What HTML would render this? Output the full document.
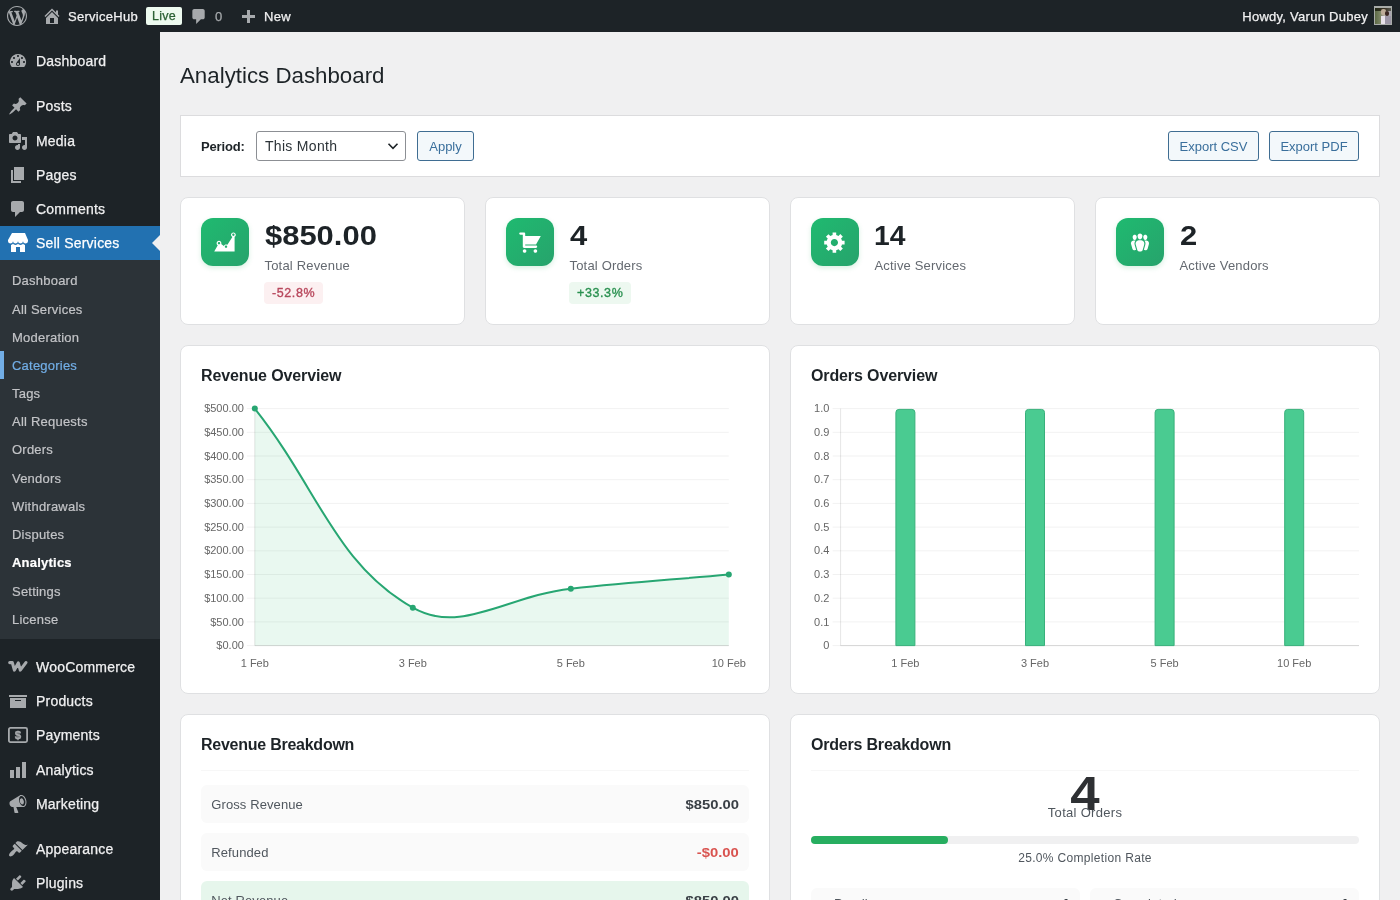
<!DOCTYPE html>
<html lang="en">
<head>
<meta charset="utf-8">
<title>Analytics Dashboard</title>
<style>
*{box-sizing:border-box;margin:0;padding:0}
html,body{width:1400px;height:900px;overflow:hidden}
body{background:#f0f0f1;font-family:"Liberation Sans",sans-serif;color:#1d2327;position:relative;font-size:13px}
.abs{position:absolute}
#bar,#side,h1,.filter,.card{will-change:transform}
/* ---------- admin bar ---------- */
#bar{position:absolute;left:0;top:0;width:1400px;height:32px;background:#1d2327;color:#f0f0f1;z-index:5}
#bar .t{position:absolute;top:1px;height:32px;line-height:32px;font-size:13px;white-space:nowrap;color:#f0f0f1;letter-spacing:.27px;-webkit-text-stroke:.25px currentColor}
#bar svg{position:absolute;fill:#a7aaad}
/* ---------- sidebar ---------- */
#side{position:absolute;left:0;top:32px;width:160px;height:868px;background:#1d2327;z-index:4}
.mi{position:absolute;left:0;width:160px;height:34px;color:#f0f0f1;font-size:14px;line-height:34px;padding-left:36px;white-space:nowrap;letter-spacing:.2px;-webkit-text-stroke:.25px currentColor}
.mi svg{position:absolute;left:8px;top:7px;width:20px;height:20px;fill:#a7aaad}
.mi.cur{background:#2271b1;color:#fff}
.mi.cur svg{fill:#fff}
#sub{position:absolute;left:0;top:228px;width:160px;height:378.700px;background:#2c3338}
.si{position:absolute;left:12px;margin-top:.4px;font-size:13px;line-height:18px;color:#c3c4c7;white-space:nowrap;letter-spacing:.22px;-webkit-text-stroke:.2px currentColor}
/* ---------- content ---------- */
#main{position:absolute;left:160px;top:32px;width:1240px;height:868px}
h1{position:absolute;left:180.300px;top:59px;font-size:22.300px;font-weight:400;line-height:34px;color:#1d2327;white-space:nowrap;letter-spacing:0}
.card{position:absolute;background:#fff;border:1px solid #dfe0e2;border-radius:8px}
.filter{position:absolute;left:180px;top:115px;width:1200px;height:62px;background:#fff;border:1px solid #dcdcde}
.btn{height:30px;line-height:30px;border:1px solid #3f6d92;border-radius:3px;background:#f3f8fb;color:#3a6f9c;font-size:13px;text-align:center;white-space:nowrap}
.row{position:absolute;left:20px;width:548px;height:38px;background:#fafafa;border-radius:6px}
.rl{position:absolute;left:10.300px;top:11px;letter-spacing:.1px;font-size:13px;line-height:18px;color:#50575e;white-space:nowrap}
.rv{position:absolute;right:10px;top:11px;font-size:13px;line-height:18px;font-weight:700;color:#393f45;white-space:nowrap;transform:scaleX(1.14);transform-origin:100% 0}
.h2{position:absolute;font-size:16px;font-weight:700;color:#1d2327;white-space:nowrap;line-height:20px;margin-top:1px;letter-spacing:-.12px}
.ico{box-shadow:0 2px 5px rgba(39,174,96,.18);position:absolute;width:48px;height:48px;border-radius:12px;background:linear-gradient(135deg,#1fba70 0%,#27a36c 100%)}
.ico svg{position:absolute;left:12px;top:12px;width:24px;height:24px;fill:#fff}
.num{position:absolute;font-size:28px;font-weight:700;color:#1d2327;line-height:32px;white-space:nowrap;transform:scaleX(1.105);transform-origin:0 0}
.lbl{position:absolute;font-size:13px;color:#646970;line-height:18px;white-space:nowrap;letter-spacing:.18px;margin-left:-.5px}
.chg{position:absolute;height:22px;line-height:22px;font-size:12.500px;font-weight:400;-webkit-text-stroke:.35px currentColor;letter-spacing:.6px;padding:0 7.400px 0 8px;border-radius:4px;white-space:nowrap}
</style>
</head>
<body>

<!-- ================= ADMIN BAR ================= -->
<div id="bar">
<svg style="left:7px;top:6px;width:20px;height:20px" viewBox="0 0 20 20"><path d="M20 10c0-5.51-4.49-10-10-10C4.48 0 0 4.49 0 10c0 5.52 4.48 10 10 10 5.51 0 10-4.48 10-10zM7.78 15.37L4.37 6.22c.55-.02 1.17-.08 1.17-.08.5-.06.44-1.13-.06-1.11 0 0-1.45.11-2.37.11-.18 0-.37 0-.58-.01C4.12 2.69 6.87 1.11 10 1.11c2.33 0 4.45.87 6.05 2.34-.68-.11-1.65.39-1.65 1.58 0 .74.45 1.36.9 2.1.35.61.55 1.36.55 2.46 0 1.49-1.4 5-1.4 5l-3.03-8.37c.54-.02.82-.17.82-.17.5-.05.44-1.25-.06-1.22 0 0-1.44.12-2.38.12-.87 0-2.33-.12-2.33-.12-.5-.03-.56 1.2-.06 1.22l.92.08 1.26 3.41zM17.41 10c.24-.64.74-1.87.43-4.25.7 1.29 1.05 2.71 1.05 4.25 0 3.29-1.73 6.24-4.4 7.78.97-2.59 1.94-5.2 2.92-7.78zM6.1 18.09C3.12 16.65 1.11 13.53 1.11 10c0-1.3.23-2.48.72-3.59C3.25 10.3 4.67 14.2 6.1 18.09zm4.03-6.63l2.58 6.98c-.86.29-1.76.45-2.71.45-.79 0-1.57-.11-2.29-.33.81-2.38 1.62-4.74 2.42-7.1z"/></svg>
<svg style="left:42px;top:6px;width:20px;height:20px" viewBox="0 0 20 20"><path d="M16 8.5l1.53 1.53-1.06 1.06L10 4.620l-6.470 6.470-1.060-1.060L10 2.500l4 4v-2h2v4zm-6-2.460l6 5.990V18H4v-5.970zM12 17v-5H8v5h4z"/></svg>
<span class="t" style="left:68px">ServiceHub</span>
<span class="t" style="left:146px;top:7px;height:18px;line-height:18px;width:36px;text-align:center;background:#edfaef;color:#2a6133;border-radius:2px;font-size:12.5px">Live</span>
<svg style="left:188.500px;top:7px;width:20px;height:19px" viewBox="0 0 20 20"><path d="M5 2h9c1.100 0 2 .900 2 2v7c0 1.100-.900 2-2 2h-2l-5 5v-5H5c-1.100 0-2-.900-2-2V4c0-1.100.900-2 2-2z"/></svg>
<span class="t" style="left:215px;color:#a7aaad">0</span>
<svg style="left:241.800px;top:10.200px;width:13px;height:13px" viewBox="0 0 13 13"><path d="M5 0h3v5h5v3H8v5H5V8H0V5h5z"/></svg>
<span class="t" style="left:264px">New</span>
<span class="t" style="right:32px">Howdy, Varun Dubey</span>
<div style="position:absolute;left:1374px;top:6px;width:18px;height:19px;background:#a9aca9;overflow:hidden"><div style="position:absolute;left:1px;top:1.500px;width:16px;height:16px;background:linear-gradient(90deg,#5d6a45 0%,#7f8768 35%,#b9b3ad 60%,#a9a5b0 100%)"></div><div style="position:absolute;left:1px;top:1.500px;width:16px;height:3px;background:linear-gradient(90deg,#232a16,#3a3326 60%,#5a5a50)"></div><div style="position:absolute;left:6.500px;top:3px;width:5px;height:6px;border-radius:2px;background:#bdac98"></div><div style="position:absolute;left:11px;top:5px;width:4px;height:5px;border-radius:2px;background:#3a2622"></div><div style="position:absolute;left:6.500px;top:9.500px;width:4.500px;height:8px;background:#e8e2ea"></div><div style="position:absolute;left:11px;top:10px;width:6px;height:7.500px;background:#9c96a6"></div></div>
</div>

<!-- ================= SIDEBAR ================= -->
<div id="side">
<div class="mi" style="top:12px"><svg style="top:7px" viewBox="0 0 20 20"><path d="M3.760 16h12.480A7.998 7.998 0 0 0 10 3a7.998 7.998 0 0 0-6.240 13zM10 4c.55 0 1 .45 1 1s-.45 1-1 1-1-.45-1-1 .45-1 1-1zM6 6c.55 0 1 .45 1 1s-.45 1-1 1-1-.45-1-1 .45-1 1-1zm8 0c.55 0 1 .45 1 1s-.45 1-1 1-1-.45-1-1 .45-1 1-1zm-5.370 5.550L12 7v6c0 1.100-.900 2-2 2s-2-.900-2-2c0-.570.240-1.080.630-1.450zM4 10c.55 0 1 .45 1 1s-.45 1-1 1-1-.45-1-1 .45-1 1-1zm12 0c.55 0 1 .45 1 1s-.45 1-1 1-1-.45-1-1 .45-1 1-1zm-5 3c0-.55-.45-1-1-1s-1 .45-1 1 .45 1 1 1 1-.45 1-1z"/></svg>Dashboard</div>
<div class="mi" style="top:57px"><svg style="top:7px" viewBox="0 0 20 20"><path d="M10.440 3.020l1.820-1.820 6.360 6.350-1.830 1.820c-1.050-.680-2.480-.570-3.410.360l-.750.750c-.920.930-1.040 2.350-.350 3.410l-1.830 1.820-2.410-2.410-2.800 2.790c-.420.420-3.380 2.710-3.800 2.290s1.860-3.390 2.280-3.810l2.790-2.790L4.100 9.360l1.830-1.820c1.050.690 2.480.570 3.400-.360l.750-.750c.930-.920 1.050-2.350.360-3.410z"/></svg>Posts</div>
<div class="mi" style="top:92px"><svg style="top:7px" viewBox="0 0 20 20"><path d="M13 11V4c0-.55-.45-1-1-1h-1.670L9 1H5L3.670 3H2c-.55 0-1 .45-1 1v7c0 .55.45 1 1 1h10c.55 0 1-.45 1-1zM7 4.500c1.380 0 2.500 1.120 2.500 2.500S8.380 9.500 7 9.500 4.500 8.380 4.500 7 5.620 4.500 7 4.500zM14 6h5v10.500c0 1.380-1.120 2.500-2.500 2.500S14 17.880 14 16.500s1.120-2.500 2.500-2.500c.17 0 .34.020.5.050V9h-3V6zm-4 8.050V13h2v3.500c0 1.380-1.120 2.500-2.500 2.500S7 17.880 7 16.500 8.120 14 9.500 14c.17 0 .34.020.5.050z"/></svg>Media</div>
<div class="mi" style="top:126px"><svg style="top:7px" viewBox="0 0 20 20"><path d="M6 15V2h10v13H6zm-1 1h8v2H3V5h2v11z"/></svg>Pages</div>
<div class="mi" style="top:160px"><svg style="top:7px" viewBox="0 0 20 20"><path d="M5 2h9c1.100 0 2 .900 2 2v7c0 1.100-.900 2-2 2h-2l-5 5v-5H5c-1.100 0-2-.900-2-2V4c0-1.100.900-2 2-2z"/></svg>Comments</div>
<div class="mi cur" style="top:194px"><svg style="top:7px" viewBox="0 0 20 20"><path d="M1 10c.41.29.96.43 1.500.43.55 0 1.090-.14 1.500-.43.62-.46 1-1.170 1-2 0 .83.37 1.540 1 2 .41.29.96.43 1.500.43.55 0 1.090-.14 1.500-.43.62-.46 1-1.170 1-2 0 .83.37 1.540 1 2 .41.29.96.43 1.510.43.54 0 1.080-.14 1.490-.43.62-.46 1-1.170 1-2 0 .83.37 1.540 1 2 .41.29.96.43 1.500.43.55 0 1.090-.14 1.500-.43.63-.46 1-1.170 1-2V7l-3-7H4L0 7v1c0 .83.37 1.540 1 2zm2 8.990h5v-5h4v5h5v-7c-.37-.05-.72-.22-1-.43-.63-.45-1-.73-1-1.560 0 .83-.38 1.110-1 1.560-.41.300-.95.430-1.490.440-.55 0-1.100-.140-1.510-.440-.63-.45-1-.73-1-1.560 0 .83-.38 1.110-1 1.560-.41.300-.95.430-1.500.440-.54 0-1.090-.140-1.500-.440-.63-.45-1-.73-1-1.560 0 .83-.38 1.110-1 1.560-.28.210-.63.380-1 .440v6.990z"/></svg>Sell Services</div>
<div style="position:absolute;left:152px;top:203px;width:0;height:0;border:8px solid transparent;border-right-color:#f0f0f1;border-left:0"></div>
<div id="sub">
<div class="si" style="top:11.4px">Dashboard</div>
<div class="si" style="top:40.3px">All Services</div>
<div class="si" style="top:68.6px">Moderation</div>
<div class="si" style="top:96.2px;color:#72aee6">Categories</div>
<div class="si" style="top:124.5px">Tags</div>
<div class="si" style="top:152.8px">All Requests</div>
<div class="si" style="top:181.1px">Orders</div>
<div class="si" style="top:209.4px">Vendors</div>
<div class="si" style="top:237.6px">Withdrawals</div>
<div class="si" style="top:265.9px">Disputes</div>
<div class="si" style="top:293.6px;color:#fff;font-weight:700">Analytics</div>
<div class="si" style="top:322.5px">Settings</div>
<div class="si" style="top:350.8px">License</div>
<div style="position:absolute;left:0;top:91px;width:4px;height:28px;background:#72aee6"></div>
</div>
<div class="mi" style="top:618px"><svg style="top:7px" viewBox="0 0 20 20"><path d="M1.700 5.600H4.300L6.400 13.100L10.300 5.900L12.300 13.100L17.900 5.600" fill="none" stroke="#a7aaad" stroke-width="3.100" stroke-linecap="round" stroke-linejoin="round"/></svg>WooCommerce</div>
<div class="mi" style="top:652px"><svg style="top:7px" viewBox="0 0 20 20"><path d="M19 4v2H1V4h18zM2 7h16v10H2V7zm11 3V9H7v1h6z"/></svg>Products</div>
<div class="mi" style="top:686px"><svg style="top:7px" viewBox="0 0 20 20"><rect x="0.900" y="2.900" width="18.200" height="14.200" rx="1.500" fill="none" stroke="#a7aaad" stroke-width="1.800"/><text x="10" y="14.100" font-family="Liberation Sans, sans-serif" font-weight="700" font-size="11.500" text-anchor="middle" fill="#a7aaad" stroke="#a7aaad" stroke-width=".4">$</text></svg>Payments</div>
<div class="mi" style="top:721px"><svg style="top:7px" viewBox="0 0 20 20"><path d="M18 18V2h-4v16h4zm-6 0V7H8v11h4zm-6 0v-8H2v8h4z"/></svg>Analytics</div>
<div class="mi" style="top:755px"><svg style="top:7px" viewBox="0 0 20 20"><path d="M18.150 5.940c.46 1.620.38 3.220-.02 4.480-.42 1.280-1.260 2.180-2.300 2.480-.16.060-.26.060-.4.060-.06.020-.12.020-.18.020-.06.020-.14.020-.22.020h-6.800l2.220 5.500c.02.140-.6.260-.14.340-.8.100-.24.160-.34.160H6.950c-.1 0-.26-.06-.34-.16-.08-.08-.16-.2-.14-.34l-1-5.500H4.250l-.02-.02c-.5.060-1.080-.18-1.540-.62s-.88-1.080-1.060-1.880c-.24-.8-.2-1.560-.02-2.200.18-.62.580-1.080 1.060-1.300l.02-.02 9-5.400c.1-.06.180-.1.240-.16.060-.4.140-.8.240-.12.160-.8.280-.12.500-.18 1.040-.3 2.240.1 3.220.98 1.020.9 1.820 2.240 2.260 3.860zm-2.580 5.980h-.02c.4-.1.740-.34 1.040-.7.580-.7.860-1.760.86-3.040 0-.64-.1-1.300-.28-1.980-.34-1.360-1.020-2.500-1.780-3.240s-1.680-1.100-2.460-.88c-.82.220-1.400.96-1.700 2-.32 1.040-.28 2.360.06 3.720.38 1.360 1 2.500 1.800 3.240.78.740 1.620 1.100 2.480.88zm-2.540-7.520c.34-.1.720-.02 1.100.16.340.18.700.52.980.9.260.38.520.88.660 1.440.14.580.16 1.120.12 1.580-.4.500-.18.900-.38 1.240-.2.300-.48.520-.82.620-.34.100-.7.060-1.060-.14-.38-.16-.72-.48-1-.88-.28-.38-.52-.88-.66-1.440-.16-.58-.2-1.120-.14-1.580.04-.5.160-.9.360-1.240.2-.30.480-.56.840-.66z"/></svg>Marketing</div>
<div class="mi" style="top:800px"><svg style="top:7px" viewBox="0 0 20 20"><path d="M14.480 11.060L7.410 3.990l1.500-1.500c.5-.56 2.300-.47 3.510.32 1.210.8 1.430 1.280 2.910 2.100 1.180.64 2.450 1.260 4.450.85zm-.710.710L6.700 4.700 4.930 6.470c-.39.39-.39 1.020 0 1.410l1.060 1.060c.39.39.39 1.030 0 1.420-.6.6-1.430 1.110-2.210 1.690-.35.26-.7.53-1.010.84C1.430 14.230.4 16.080 1.400 17.070c.99 1 2.840-.03 4.180-1.360.31-.31.580-.66.850-1.020.57-.78 1.080-1.610 1.690-2.210.39-.39 1.020-.39 1.410 0l1.060 1.060c.39.39 1.020.39 1.410 0z"/></svg>Appearance</div>
<div class="mi" style="top:834px"><svg style="top:7px" viewBox="0 0 20 20"><path d="M13.110 4.360L9.870 7.600 8 5.730l3.240-3.240c.35-.34 1.050-.2 1.560.32.52.51.66 1.210.31 1.550zm-8 1.770l.91-1.120 9.010 9.010-1.190.84c-.71.71-2.630 1.160-3.820 1.160H6.140L4.900 17.260c-.59.59-1.540.59-2.120 0-.59-.58-.59-1.530 0-2.120l1.240-1.240v-3.880c0-1.130.4-3.190 1.090-3.890zm7.260 3.970l3.240-3.240c.34-.35 1.040-.21 1.550.31.52.51.66 1.210.31 1.550l-3.240 3.250z"/></svg>Plugins</div>
</div>

<!-- ================= CONTENT ================= -->
<h1>Analytics Dashboard</h1>

<div class="filter">
<span class="abs" style="left:20px;top:22px;font-size:13px;font-weight:700;line-height:18px;color:#1d2327;letter-spacing:-.15px">Period:</span>
<div class="abs" style="left:75px;top:15px;width:150px;height:30px;border:1px solid #8c8f94;border-radius:3px;background:#fff;font-size:14px;line-height:28px;padding-left:8px;color:#2c3338;letter-spacing:.3px">This Month
<svg class="abs" style="right:6px;top:8px;width:12px;height:12px" viewBox="0 0 12 12"><path d="M1.500 3.800L6 8.300l4.500-4.500" fill="none" stroke="#1d2327" stroke-width="1.600"/></svg></div>
<div class="abs btn" style="left:236px;top:15px;width:57px">Apply</div>
<div class="abs btn" style="left:987px;top:15px;width:91px">Export CSV</div>
<div class="abs btn" style="left:1088px;top:15px;width:90px">Export PDF</div>
</div>

<!-- stat cards -->
<div class="card" id="c1" style="left:180px;top:197px;width:285px;height:128px">
<div class="ico" style="left:20px;top:20px"><svg viewBox="0 0 20 20"><path d="M18 18l.01-12.280c.59-.35.99-.99.99-1.720 0-1.100-.9-2-2-2s-2 .9-2 2c0 .8.47 1.480 1.140 1.800l-4.130 6.580c-.33-.24-.73-.38-1.160-.38-.84 0-1.550.51-1.850 1.240l-2.140-1.530c.09-.22.14-.46.14-.71 0-1.110-.89-2-2-2-1.100 0-2 .89-2 2 0 .73.4 1.360.98 1.710L1 18h17zM17 3c.55 0 1 .45 1 1s-.45 1-1 1-1-.45-1-1 .45-1 1-1zM5 10c.55 0 1 .45 1 1s-.45 1-1 1-1-.45-1-1 .45-1 1-1zm5.850 3c.55 0 1 .45 1 1s-.45 1-1 1-1-.45-1-1 .45-1 1-1z"/></svg></div>
<div class="num" style="left:84px;top:21.500px">$850.00</div>
<div class="lbl" style="left:84px;top:59px">Total Revenue</div>
<div class="chg" style="left:83px;top:84px;background:#fcf0f1;color:#b8475c">-52.8%</div>
</div>
<div class="card" id="c2" style="left:485px;top:197px;width:285px;height:128px">
<div class="ico" style="left:20px;top:20px"><svg viewBox="0 0 20 20"><path d="M6 13h9c.55 0 1 .45 1 1s-.45 1-1 1H5c-.55 0-1-.45-1-1V4H2c-.55 0-1-.45-1-1s.45-1 1-1h3c.55 0 1 .45 1 1v2h13l-4 7H6v1zm-.5 3c.83 0 1.500.67 1.500 1.500S6.330 19 5.500 19 4 18.330 4 17.500 4.670 16 5.500 16zm9 0c.83 0 1.500.67 1.500 1.500s-.67 1.500-1.500 1.500-1.500-.67-1.500-1.500.67-1.500 1.500-1.500z"/></svg></div>
<div class="num" style="left:84px;top:21.500px">4</div>
<div class="lbl" style="left:84px;top:59px">Total Orders</div>
<div class="chg" style="left:83px;top:84px;background:#edf8f0;color:#2a9150">+33.3%</div>
</div>
<div class="card" id="c3" style="left:790px;top:197px;width:285px;height:128px">
<div class="ico" style="left:20px;top:20px"><svg viewBox="0 0 20 20"><path d="M18 12h-2.180c-.17.7-.44 1.350-.81 1.930l1.540 1.540-2.100 2.100-1.540-1.540c-.58.36-1.230.63-1.910.79V19H8v-2.180c-.68-.16-1.330-.43-1.910-.79l-1.540 1.540-2.120-2.120 1.540-1.540c-.36-.58-.63-1.230-.79-1.910H1V9.030h2.170c.16-.7.44-1.350.8-1.940L2.430 5.550l2.100-2.100 1.540 1.540c.58-.37 1.240-.64 1.930-.81V2h3v2.180c.68.16 1.330.43 1.910.79l1.540-1.540 2.120 2.120-1.540 1.540c.36.59.64 1.240.8 1.940H18V12zm-8.500 1.500c1.660 0 3-1.340 3-3s-1.340-3-3-3-3 1.340-3 3 1.340 3 3 3z"/></svg></div>
<div class="num" style="left:82.500px;top:21.500px;transform:scaleX(1.01)">14</div>
<div class="lbl" style="left:84px;top:59px">Active Services</div>
</div>
<div class="card" id="c4" style="left:1095px;top:197px;width:285px;height:128px">
<div class="ico" style="left:20px;top:20px"><svg viewBox="0 0 20 20"><path d="M8.030 4.460c-.29 1.280.55 3.460 1.970 3.460 1.410 0 2.250-2.180 1.960-3.460-.22-.98-1.080-1.630-1.960-1.630-.89 0-1.740.65-1.970 1.630zm-4.130.9c-.25 1.080.47 2.930 1.670 2.930s1.920-1.850 1.670-2.930c-.19-.83-.92-1.390-1.670-1.390s-1.480.56-1.670 1.390zm8.860 0c-.25 1.080.47 2.930 1.660 2.930 1.200 0 1.920-1.850 1.670-2.930-.19-.83-.92-1.390-1.670-1.390-.74 0-1.470.56-1.660 1.390zm-.59 11.430l1.250-4.300C14.200 10 12.710 8.470 10 8.470c-2.720 0-4.210 1.530-3.440 4.020l1.260 4.300C8.050 17.510 9 18 10 18c.98 0 1.940-.49 2.170-1.210zm-6.100-7.630c-.49.67-.96 1.830-.42 3.590l1.120 3.790c-.34.2-.77.31-1.200.31-.85 0-1.650-.41-1.850-1.030l-1.070-3.650c-.65-2.110.61-3.400 2.920-3.400.27 0 .54.02.79.06-.1.1-.2.22-.29.33zm8.350-.39c2.310 0 3.580 1.290 2.920 3.400l-1.070 3.650c-.2.620-1 1.030-1.850 1.030-.43 0-.86-.11-1.200-.31l1.110-3.770c.55-1.780.08-2.940-.42-3.610-.08-.11-.18-.23-.28-.33.25-.04.51-.06.79-.06z"/></svg></div>
<div class="num" style="left:84px;top:21.500px">2</div>
<div class="lbl" style="left:84px;top:59px">Active Vendors</div>
</div>

<!-- chart cards -->
<div class="card" id="rev" style="left:180px;top:345px;width:590px;height:349px">
<div class="h2" style="left:20px;top:19px">Revenue Overview</div>
<svg class="abs" style="left:-1px;top:-1px" width="590" height="349" viewBox="0 0 590 349" font-family="Liberation Sans, sans-serif" font-size="11" fill="#666">
<line x1="66.8" y1="63.6" x2="548.8" y2="63.6" stroke="#000" stroke-opacity="0.055" stroke-width="1"/>
<text x="63.9" y="67.2" text-anchor="end">$500.00</text>
<line x1="66.8" y1="87.3" x2="548.8" y2="87.3" stroke="#000" stroke-opacity="0.055" stroke-width="1"/>
<text x="63.9" y="90.9" text-anchor="end">$450.00</text>
<line x1="66.8" y1="111.0" x2="548.8" y2="111.0" stroke="#000" stroke-opacity="0.055" stroke-width="1"/>
<text x="63.9" y="114.6" text-anchor="end">$400.00</text>
<line x1="66.8" y1="134.7" x2="548.8" y2="134.7" stroke="#000" stroke-opacity="0.055" stroke-width="1"/>
<text x="63.9" y="138.3" text-anchor="end">$350.00</text>
<line x1="66.8" y1="158.4" x2="548.8" y2="158.4" stroke="#000" stroke-opacity="0.055" stroke-width="1"/>
<text x="63.9" y="162.0" text-anchor="end">$300.00</text>
<line x1="66.8" y1="182.1" x2="548.8" y2="182.1" stroke="#000" stroke-opacity="0.055" stroke-width="1"/>
<text x="63.9" y="185.7" text-anchor="end">$250.00</text>
<line x1="66.8" y1="205.8" x2="548.8" y2="205.8" stroke="#000" stroke-opacity="0.055" stroke-width="1"/>
<text x="63.9" y="209.4" text-anchor="end">$200.00</text>
<line x1="66.8" y1="229.5" x2="548.8" y2="229.5" stroke="#000" stroke-opacity="0.055" stroke-width="1"/>
<text x="63.9" y="233.1" text-anchor="end">$150.00</text>
<line x1="66.8" y1="253.2" x2="548.8" y2="253.2" stroke="#000" stroke-opacity="0.055" stroke-width="1"/>
<text x="63.9" y="256.8" text-anchor="end">$100.00</text>
<line x1="66.8" y1="276.9" x2="548.8" y2="276.9" stroke="#000" stroke-opacity="0.055" stroke-width="1"/>
<text x="63.9" y="280.5" text-anchor="end">$50.00</text>
<line x1="66.8" y1="300.6" x2="548.8" y2="300.6" stroke="#000" stroke-opacity="0.055" stroke-width="1"/>
<text x="63.9" y="304.2" text-anchor="end">$0.00</text>
<line x1="74.8" y1="63.6" x2="74.8" y2="300.6" stroke="#000" stroke-opacity="0.10" stroke-width="1"/>
<line x1="74.8" y1="300.6" x2="548.8" y2="300.6" stroke="#000" stroke-opacity="0.12" stroke-width="1"/>
<path d="M74.8 63.6 C138.0 143.2 155.1 218.4 232.8 262.7 C281.5 290.4 327.5 250.4 390.8 243.7 C453.9 237.1 485.6 235.2 548.8 229.5 L548.8 300.6 L74.8 300.6 Z" fill="#36c077" fill-opacity="0.11"/>
<path d="M74.8 63.6 C138.0 143.2 155.1 218.4 232.8 262.7 C281.5 290.4 327.5 250.4 390.8 243.7 C453.9 237.1 485.6 235.2 548.8 229.5" fill="none" stroke="#27a672" stroke-width="2" stroke-linejoin="round"/>
<circle cx="74.8" cy="63.6" r="3" fill="#27a672"/>
<circle cx="232.8" cy="262.7" r="3" fill="#27a672"/>
<circle cx="390.8" cy="243.7" r="3" fill="#27a672"/>
<circle cx="548.8" cy="229.5" r="3" fill="#27a672"/>
<text x="74.8" y="322.0" text-anchor="middle">1 Feb</text>
<text x="232.8" y="322.0" text-anchor="middle">3 Feb</text>
<text x="390.8" y="322.0" text-anchor="middle">5 Feb</text>
<text x="548.8" y="322.0" text-anchor="middle">10 Feb</text>
</svg>
</div>
<div class="card" id="ord" style="left:790px;top:345px;width:590px;height:349px">
<div class="h2" style="left:20px;top:19px">Orders Overview</div>
<svg class="abs" style="left:-1px;top:-1px" width="590" height="349" viewBox="0 0 590 349" font-family="Liberation Sans, sans-serif" font-size="11" fill="#666">
<line x1="42.6" y1="63.6" x2="569.0" y2="63.6" stroke="#000" stroke-opacity="0.055" stroke-width="1"/>
<text x="39.4" y="67.2" text-anchor="end">1.0</text>
<line x1="42.6" y1="87.3" x2="569.0" y2="87.3" stroke="#000" stroke-opacity="0.055" stroke-width="1"/>
<text x="39.4" y="90.9" text-anchor="end">0.9</text>
<line x1="42.6" y1="111.0" x2="569.0" y2="111.0" stroke="#000" stroke-opacity="0.055" stroke-width="1"/>
<text x="39.4" y="114.6" text-anchor="end">0.8</text>
<line x1="42.6" y1="134.7" x2="569.0" y2="134.7" stroke="#000" stroke-opacity="0.055" stroke-width="1"/>
<text x="39.4" y="138.3" text-anchor="end">0.7</text>
<line x1="42.6" y1="158.4" x2="569.0" y2="158.4" stroke="#000" stroke-opacity="0.055" stroke-width="1"/>
<text x="39.4" y="162.0" text-anchor="end">0.6</text>
<line x1="42.6" y1="182.1" x2="569.0" y2="182.1" stroke="#000" stroke-opacity="0.055" stroke-width="1"/>
<text x="39.4" y="185.7" text-anchor="end">0.5</text>
<line x1="42.6" y1="205.8" x2="569.0" y2="205.8" stroke="#000" stroke-opacity="0.055" stroke-width="1"/>
<text x="39.4" y="209.4" text-anchor="end">0.4</text>
<line x1="42.6" y1="229.5" x2="569.0" y2="229.5" stroke="#000" stroke-opacity="0.055" stroke-width="1"/>
<text x="39.4" y="233.1" text-anchor="end">0.3</text>
<line x1="42.6" y1="253.2" x2="569.0" y2="253.2" stroke="#000" stroke-opacity="0.055" stroke-width="1"/>
<text x="39.4" y="256.8" text-anchor="end">0.2</text>
<line x1="42.6" y1="276.9" x2="569.0" y2="276.9" stroke="#000" stroke-opacity="0.055" stroke-width="1"/>
<text x="39.4" y="280.5" text-anchor="end">0.1</text>
<line x1="42.6" y1="300.6" x2="569.0" y2="300.6" stroke="#000" stroke-opacity="0.055" stroke-width="1"/>
<text x="39.4" y="304.2" text-anchor="end">0</text>
<line x1="50.6" y1="63.6" x2="50.6" y2="300.6" stroke="#000" stroke-opacity="0.10" stroke-width="1"/>
<line x1="50.6" y1="300.6" x2="569.0" y2="300.6" stroke="#000" stroke-opacity="0.12" stroke-width="1"/>
<path d="M105.9 300.6 V67.4 Q105.9 64.4 108.9 64.4 H121.9 Q124.9 64.4 124.9 67.4 V300.6 Z" fill="#4acb91" stroke="#38b07b" stroke-width="1"/>
<text x="115.4" y="322.0" text-anchor="middle">1 Feb</text>
<path d="M235.5 300.6 V67.4 Q235.5 64.4 238.5 64.4 H251.5 Q254.5 64.4 254.5 67.4 V300.6 Z" fill="#4acb91" stroke="#38b07b" stroke-width="1"/>
<text x="245.0" y="322.0" text-anchor="middle">3 Feb</text>
<path d="M365.1 300.6 V67.4 Q365.1 64.4 368.1 64.4 H381.1 Q384.1 64.4 384.1 67.4 V300.6 Z" fill="#4acb91" stroke="#38b07b" stroke-width="1"/>
<text x="374.6" y="322.0" text-anchor="middle">5 Feb</text>
<path d="M494.7 300.6 V67.4 Q494.7 64.4 497.7 64.4 H510.7 Q513.7 64.4 513.7 67.4 V300.6 Z" fill="#4acb91" stroke="#38b07b" stroke-width="1"/>
<text x="504.2" y="322.0" text-anchor="middle">10 Feb</text>
</svg>
</div>

<!-- breakdown cards -->
<div class="card" id="rb" style="left:180px;top:714px;width:590px;height:300px">
<div class="h2" style="left:20px;top:19px;letter-spacing:-.25px">Revenue Breakdown</div>
<div class="abs" style="left:20px;top:55px;width:548px;height:1px;background:#f7f7f7"></div>
<div class="row" style="top:70px"><span class="rl">Gross Revenue</span><span class="rv">$850.00</span></div>
<div class="row" style="top:118px"><span class="rl">Refunded</span><span class="rv" style="color:#d9534f">-$0.00</span></div>
<div class="row" style="top:166px;background:#e6f6ec"><span class="rl">Net Revenue</span><span class="rv">$850.00</span></div>
</div>
<div class="card" id="ob" style="left:790px;top:714px;width:590px;height:300px">
<div class="h2" style="left:20px;top:19px;letter-spacing:-.2px">Orders Breakdown</div>
<div class="abs" style="left:20px;top:55px;width:548px;height:1px;background:#f7f7f7"></div>
<div class="abs" style="left:0;top:54.500px;width:588px;text-align:center;font-size:48px;line-height:48px;font-weight:700;color:#2e3033;transform:scaleX(1.1)">4</div>
<div class="abs" style="left:0;top:89px;width:588px;text-align:center;font-size:13px;line-height:18px;color:#50575e;letter-spacing:.3px">Total Orders</div>
<div class="abs" style="left:20px;top:120.500px;width:548px;height:8px;border-radius:4px;background:#f0f0f1"><div style="width:137px;height:8px;border-radius:4px;background:#27ae60"></div></div>
<div class="abs" style="left:0;top:134px;width:588px;text-align:center;font-size:12px;line-height:18px;color:#50575e;letter-spacing:.33px">25.0% Completion Rate</div>
<div class="row" style="top:173px;width:269px"><span class="rl" style="left:23px;top:6.500px">Pending</span><span class="rv" style="top:6.500px">1</span></div>
<div class="row" style="top:173px;left:299px;width:269px"><span class="rl" style="left:23px;top:6.500px">Completed</span><span class="rv" style="top:6.500px">1</span></div>
</div>

</body>
</html>
